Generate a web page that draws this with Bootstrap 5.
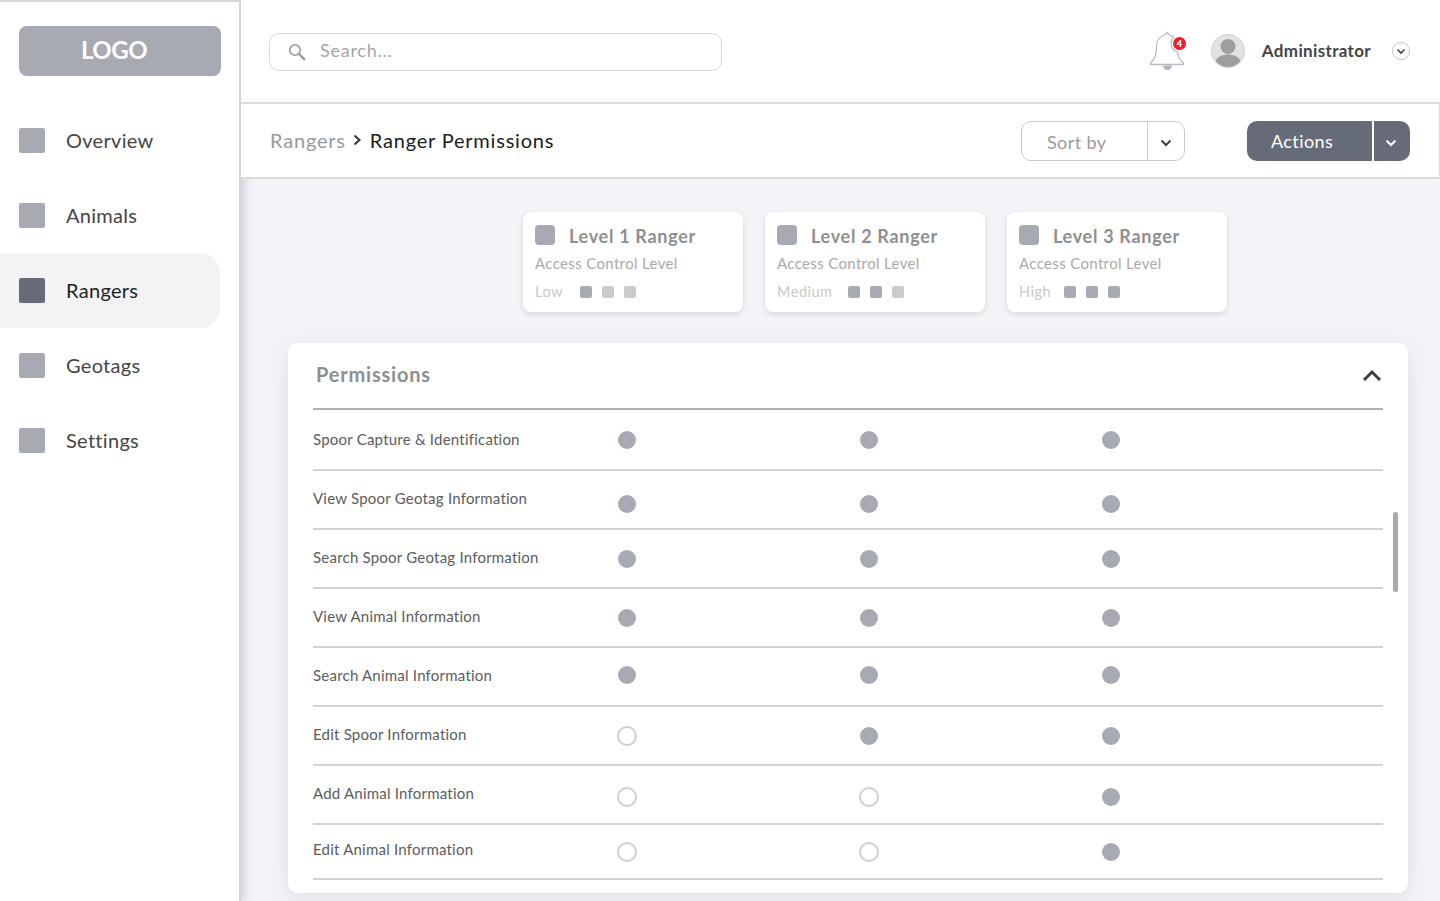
<!DOCTYPE html>
<html lang="en">
<head>
    <meta charset="UTF-8">
    <title>Ranger Permissions</title>
    <link href="https://cdn.jsdelivr.net/npm/bootstrap@5.3.0/dist/css/bootstrap.min.css" rel="stylesheet">
    <style>
        html, body { height: 901px; overflow: hidden; }
        body { font-family: "Lato", "Liberation Sans", sans-serif; background: #fff; letter-spacing: .5px; }

        .app-shell { height: 901px; }
        .side-bar { width: 241px; flex: none; border-top: 2px solid #d5d5d5; border-right: 2px solid #d5d5d5; box-shadow: 3px 0 10px rgba(120,125,135,.35); position: relative; z-index: 1; background: #fff; padding-top: 24px; }
        .logo-box { width: 202px; height: 50px; margin-left: 19px; background: #a7aab2; border-radius: 8px; color: #fff; font-size: 24px; font-weight: 700; padding-left: 62px; line-height: 48px; letter-spacing: -.5px; }
        .side-nav { margin-top: 27px; }
        .side-link { width: 220px; height: 75px; padding: 0 0 2px 19px; gap: 21px; color: #454545; font-size: 20px; letter-spacing: .3px; text-decoration: none; border-radius: 0 20px 20px 0; }
        .side-link.is-active { background: #f3f3f6; color: #1f1f1f; }
        .nav-square { width: 26px; height: 25px; margin-top: 2px; background: #a7aab2; border-radius: 2px; }
        .is-active .nav-square { background: #666b78; }

        .main-col { min-width: 0; background: #f4f5f9; }
        .top-bar { height: 104px; background: #fff; border-bottom: 2px solid #dcdcdc; position: relative; z-index: 2; padding: 0 30px 0 28px; }
        .search-wrap { width: 453px; height: 38px; position: relative; margin-right: auto; margin-top: 2px; }
        .search-wrap .form-control { height: 38px; border: 1px solid #d8d8d8; border-radius: 10px; padding: 0 0 4px 50px; font-size: 18px; letter-spacing: .75px; box-shadow: none; }
        .search-wrap .form-control::placeholder { color: #a5a5a5; }
        .search-icon { position: absolute; left: 19px; top: 10px; }
        .bell-wrap { position: relative; width: 38px; height: 40px; margin-right: 24px; }
        .bell-count { position: absolute; left: 24px; top: 6px; width: 13px; height: 13px; border-radius: 50%; background: #ee1c2e; color: #fff; font-size: 9px; font-weight: 900; line-height: 13px; text-align: center; letter-spacing: 0; }
        .user-name { font-size: 17px; font-weight: 700; color: #454545; letter-spacing: .35px; margin: 0 21px 0 17px; }

        .crumb-bar { height: 75px; background: #fff; border-bottom: 2px solid #dcdcdc; border-right: 1px solid #dcdcdc; position: relative; z-index: 2; padding: 0 29px 0 29px; }
        .crumb-text { font-size: 20px; color: #9a9a9a; gap: 7.5px; margin: -2px auto 0 0; letter-spacing: .8px; }
        .crumb-text b { font-weight: 400; color: #1c1c1c; }
        .sort-group { width: 164px; height: 40px; margin: 1px 62px 0 0; }
        .sort-group .btn { border: 1px solid #c9c9c9; background: #fff; border-radius: 10px; color: #9a9a9a; font-size: 18px; padding: 2px 0 0; letter-spacing: .4px; }
        .sort-group .btn:first-child { width: 127px; text-align: left; padding-left: 25px; }
        .sort-group .btn:last-child { width: 38px; flex: none; padding: 0 1px 0 0; }
        .action-group { width: 163px; height: 40px; margin-top: 1px; }
        .action-group .btn { background: #666b78; border: 0; border-radius: 10px; color: #fff; font-size: 18px; padding: 0; letter-spacing: .4px; }
        .action-group .btn:first-child { width: 126px; text-align: left; padding-left: 24px; }
        .action-group .btn:last-child { width: 38px; flex: none; border-left: 2px solid #fff; padding-right: 2px; }

        .level-row { gap: 22px; padding-top: 33px; margin-left: 282px; }
        .level-card { width: 220px; height: 100px; border: 0; border-radius: 8px; box-shadow: 0 2px 6px rgba(120,125,135,.25); padding: 12px 12px 0; }
        .level-icon { width: 20px; height: 20px; background: #a7aab2; border-radius: 4px; margin-top: -2px; }
        .level-title { font-size: 18px; font-weight: 700; color: #8f8f8f; margin-left: 14px; line-height: 24px; letter-spacing: .7px; }
        .level-sub { font-size: 15px; color: #a9a9a9; margin-top: 4px; line-height: 22px; letter-spacing: .35px; }
        .level-foot { font-size: 14.5px; color: #c9c9c9; margin-top: 8px; line-height: 20px; }
        .level-name { width: 45px; }
        .level-name.is-wide { width: 71px; }
        .pip { width: 12px; height: 12px; background: #cbcbcb; border-radius: 2px; margin-right: 10px; }
        .pip.is-on { background: #a7aab2; }

        .perm-panel { width: 1120px; height: 550px; margin: 31px 0 0 47px; background: #fff; border: 0; border-radius: 10px; padding: 0 25px; position: relative; box-shadow: 0 6px 24px rgba(120,125,135,.18); }
        .perm-head { height: 67px; border-bottom: 2px solid #b0b0b0; padding: 0 1px 0 3px; }
        .perm-head span { font-size: 20px; font-weight: 700; color: #8f8f8f; letter-spacing: .8px; margin-bottom: 3px; }
        .perm-row { height: 59px; border-bottom: 2px solid #d2d2d2; }
        .perm-row:nth-child(2) { height: 61px; }
        .perm-row:nth-child(9) { height: 55px; }
        .perm-label { width: 305px; font-size: 15px; color: #5c5c5c; letter-spacing: .22px; margin-bottom: 2px; }
        .perm-row:nth-child(2) .perm-label { margin-bottom: 0; }
        .perm-row:nth-child(9) .perm-label { margin-bottom: 5px; }
        .perm-cell { width: 242px; }
        .perm-dot { display: block; width: 18px; height: 18px; border-radius: 50%; background: #a7aab2; }
        .perm-dot.is-off { width: 20px; height: 20px; margin-left: -1px; background: none; border: 2px solid #cfcfcf; }
        .perm-row:nth-child(3) .perm-dot { margin-top: 8px; }
        .perm-row:nth-child(6) .perm-dot { margin-top: -4px; }
        .perm-row:nth-child(8) .perm-dot { margin-top: 4px; }
        .perm-row:nth-child(9) .perm-dot { margin-top: 1px; }
        .scroll-thumb { position: absolute; left: 1105px; top: 169px; width: 5px; height: 80px; background: #a7aab2; border-radius: 3px; }
    </style>
</head>
<body>
<div class="app-shell d-flex">
    <aside class="side-bar">
        <div class="logo-box">LOGO</div>
        <nav class="side-nav">
            <a class="side-link d-flex align-items-center" href="#"><span class="nav-square"></span>Overview</a>
            <a class="side-link d-flex align-items-center" href="#"><span class="nav-square"></span>Animals</a>
            <a class="side-link is-active d-flex align-items-center" href="#"><span class="nav-square"></span>Rangers</a>
            <a class="side-link d-flex align-items-center" href="#"><span class="nav-square"></span>Geotags</a>
            <a class="side-link d-flex align-items-center" href="#"><span class="nav-square"></span>Settings</a>
        </nav>
    </aside>

    <div class="main-col flex-grow-1">
        <header class="top-bar d-flex align-items-center">
            <div class="search-wrap">
                <svg class="search-icon" width="18" height="18" viewBox="0 0 18 18" fill="none">
                    <circle cx="7" cy="7" r="5.2" stroke="#9a9a9a" stroke-width="1.6"/>
                    <path d="M11 11l6 6" stroke="#9a9a9a" stroke-width="2.4"/>
                </svg>
                <input class="form-control" type="text" placeholder="Search...">
            </div>
            <div class="bell-wrap">
                <svg width="38" height="40" viewBox="0 0 38 40" fill="none">
                    <path d="M25 6.500c-1-.8-2.500-1.500-3.500-2-1.500-.6-2.500-1.800-3.500-3-1 1.200-2 2.400-3.500 3C10 6.500 7.500 10 7.500 15c0 8-1 13-5.500 16.500-.8.700-.5 2 .5 2h31c1 0 1.300-1.300.5-2-3.500-2.700-5-6-5.500-11" stroke="#b9bbc0" stroke-width="1.3"/>
                    <path d="M25 6.500A8 8 0 0 0 28.500 20.500" stroke="#b9bbc0" stroke-width="1.3"/>
                    <path d="M14 34.500h9c0 2.500-2 4.500-4.500 4.500S14 37 14 34.500z" fill="#b3b5bb"/>
                </svg>
                <span class="bell-count">4</span>
            </div>
            <svg width="34" height="34" viewBox="0 0 34 34">
                <defs><clipPath id="avatarClip"><circle cx="17" cy="17" r="16"/></clipPath></defs>
                <circle cx="17" cy="17" r="16.500" fill="#e2e2e2" stroke="#cfcfcf"/>
                <g clip-path="url(#avatarClip)" fill="#9e9e9e">
                    <circle cx="17" cy="12.500" r="7.500"/>
                    <ellipse cx="17" cy="28" rx="12.500" ry="7.500"/>
                </g>
            </svg>
            <span class="user-name">Administrator</span>
            <svg width="18" height="18" viewBox="0 0 18 18" fill="none">
                <circle cx="9" cy="9" r="8.500" stroke="#c3c3c3"/>
                <path d="M5.500 7.500L9 11l3.500-3.500" stroke="#454545" stroke-width="1.600"/>
            </svg>
        </header>

        <div class="crumb-bar d-flex align-items-center">
            <div class="crumb-text d-flex align-items-center">
                Rangers
                <svg width="9" height="12" viewBox="0 0 9 12" fill="none"><path d="M1.500 1.500L6.500 6l-5 4.500" stroke="#333" stroke-width="2"/></svg>
                <b>Ranger Permissions</b>
            </div>
            <div class="btn-group sort-group">
                <button class="btn" type="button">Sort by</button>
                <button class="btn" type="button">
                    <svg width="12" height="8" viewBox="0 0 12 8" fill="none"><path d="M1.500 1.500L6 6l4.500-4.500" stroke="#3f3f3f" stroke-width="2"/></svg>
                </button>
            </div>
            <div class="btn-group action-group">
                <button class="btn" type="button">Actions</button>
                <button class="btn" type="button">
                    <svg width="12" height="8" viewBox="0 0 12 8" fill="none"><path d="M1.500 1.500L6 6l4.500-4.500" stroke="#fff" stroke-width="2"/></svg>
                </button>
            </div>
        </div>

        <div class="level-row d-flex">
            <div class="card level-card">
                <div class="d-flex align-items-center"><span class="level-icon"></span><span class="level-title">Level 1 Ranger</span></div>
                <div class="level-sub">Access Control Level</div>
                <div class="level-foot d-flex align-items-center"><span class="level-name">Low</span><span class="pip is-on"></span><span class="pip"></span><span class="pip"></span></div>
            </div>
            <div class="card level-card">
                <div class="d-flex align-items-center"><span class="level-icon"></span><span class="level-title">Level 2 Ranger</span></div>
                <div class="level-sub">Access Control Level</div>
                <div class="level-foot d-flex align-items-center"><span class="level-name is-wide">Medium</span><span class="pip is-on"></span><span class="pip is-on"></span><span class="pip"></span></div>
            </div>
            <div class="card level-card">
                <div class="d-flex align-items-center"><span class="level-icon"></span><span class="level-title">Level 3 Ranger</span></div>
                <div class="level-sub">Access Control Level</div>
                <div class="level-foot d-flex align-items-center"><span class="level-name">High</span><span class="pip is-on"></span><span class="pip is-on"></span><span class="pip is-on"></span></div>
            </div>
        </div>

        <section class="card perm-panel">
            <div class="perm-head d-flex align-items-center justify-content-between">
                <span>Permissions</span>
                <svg width="20" height="13" viewBox="0 0 20 13" fill="none"><path d="M2 11l8-8 8 8" stroke="#3f3f3f" stroke-width="3"/></svg>
            </div>
            <div class="perm-row d-flex align-items-center"><div class="perm-label">Spoor Capture &amp; Identification</div><div class="perm-cell"><span class="perm-dot"></span></div><div class="perm-cell"><span class="perm-dot"></span></div><div class="perm-cell"><span class="perm-dot"></span></div></div>
            <div class="perm-row d-flex align-items-center"><div class="perm-label">View Spoor Geotag Information</div><div class="perm-cell"><span class="perm-dot"></span></div><div class="perm-cell"><span class="perm-dot"></span></div><div class="perm-cell"><span class="perm-dot"></span></div></div>
            <div class="perm-row d-flex align-items-center"><div class="perm-label">Search Spoor Geotag Information</div><div class="perm-cell"><span class="perm-dot"></span></div><div class="perm-cell"><span class="perm-dot"></span></div><div class="perm-cell"><span class="perm-dot"></span></div></div>
            <div class="perm-row d-flex align-items-center"><div class="perm-label">View Animal Information</div><div class="perm-cell"><span class="perm-dot"></span></div><div class="perm-cell"><span class="perm-dot"></span></div><div class="perm-cell"><span class="perm-dot"></span></div></div>
            <div class="perm-row d-flex align-items-center"><div class="perm-label">Search Animal Information</div><div class="perm-cell"><span class="perm-dot"></span></div><div class="perm-cell"><span class="perm-dot"></span></div><div class="perm-cell"><span class="perm-dot"></span></div></div>
            <div class="perm-row d-flex align-items-center"><div class="perm-label">Edit Spoor Information</div><div class="perm-cell"><span class="perm-dot is-off"></span></div><div class="perm-cell"><span class="perm-dot"></span></div><div class="perm-cell"><span class="perm-dot"></span></div></div>
            <div class="perm-row d-flex align-items-center"><div class="perm-label">Add Animal Information</div><div class="perm-cell"><span class="perm-dot is-off"></span></div><div class="perm-cell"><span class="perm-dot is-off"></span></div><div class="perm-cell"><span class="perm-dot"></span></div></div>
            <div class="perm-row d-flex align-items-center"><div class="perm-label">Edit Animal Information</div><div class="perm-cell"><span class="perm-dot is-off"></span></div><div class="perm-cell"><span class="perm-dot is-off"></span></div><div class="perm-cell"><span class="perm-dot"></span></div></div>
            <div class="scroll-thumb"></div>
        </section>
    </div>
</div>
<script src="https://cdn.jsdelivr.net/npm/bootstrap@5.3.0/dist/js/bootstrap.bundle.min.js"></script>
</body>
</html>
